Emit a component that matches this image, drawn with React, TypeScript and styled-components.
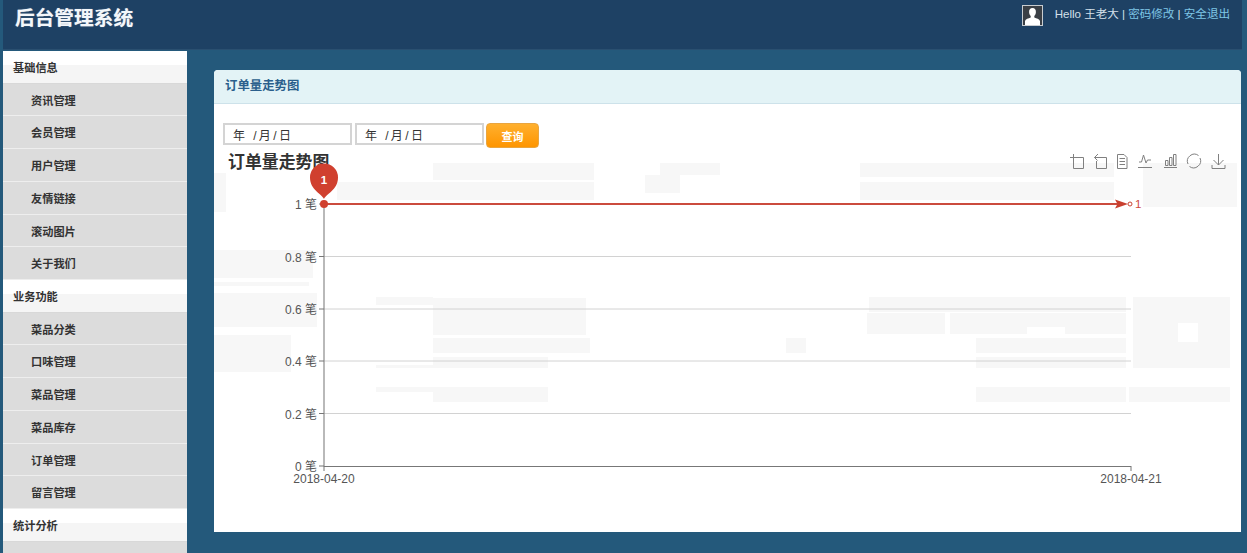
import React from "react";
import styled, { createGlobalStyle } from "styled-components";

const FONT = `"Liberation Sans", "Noto Sans CJK SC", sans-serif`;
const ROW = 32.72;

const Global = createGlobalStyle`
  html, body { margin: 0; padding: 0; background: #24597b; overflow: hidden; }
  * { box-sizing: border-box; }
`;

const Page = styled.div`
  width: 1247px;
  height: 553px;
  overflow: hidden;
  background: #24597b;
  font-family: ${FONT};
  display: flex;
  flex-direction: column;
`;

const Header = styled.header`
  flex: none;
  height: 50px;
  margin: 0 5px 0 3px;
  background: #1e4164;
  border-bottom: 1px solid #2a4f70;
  display: flex;
  justify-content: space-between;
  align-items: flex-start;
`;

const Brand = styled.h1`
  margin: 5px 0 0 12px;
  font-size: 19.7px;
  line-height: 26px;
  font-weight: 700;
  color: #f4f7fa;
  text-shadow: 0 0 1px rgba(255, 255, 255, 0.5);
`;

const UserBar = styled.div`
  display: flex;
  align-items: flex-start;
  padding: 5px 12px 0 0;
`;

const Avatar = styled.svg`
  display: block;
  width: 21px;
  height: 21px;
  margin-right: 12px;
`;

const UserText = styled.div`
  font-size: 11.55px;
  line-height: 18px;
  color: #d5e0ea;
  white-space: nowrap;
`;

const UserLink = styled.a`
  color: #7fc6e6;
  text-decoration: none;
`;

const Body = styled.div`
  flex: 1;
  min-height: 0;
  margin-top: 1px;
  display: flex;
`;

const Sidebar = styled.nav`
  flex: none;
  width: 184px;
  margin-left: 3px;
  overflow: hidden;
`;

const GroupTitle = styled.div`
  height: ${ROW}px;
  padding-left: 10px;
  font-size: 11.2px;
  line-height: ${ROW + 3}px;
  font-weight: 700;
  color: #333;
  background: linear-gradient(#fff 0, #fff 45%, #f5f5f5 45%, #f5f5f5 100%);
  border-bottom: 1px solid #d8d8d8;
`;

const Item = styled.a`
  display: block;
  height: ${ROW}px;
  padding-left: 28px;
  font-size: 11.2px;
  line-height: ${ROW + 3}px;
  font-weight: 700;
  color: #333;
  background: #dcdcdc;
  border-bottom: 1px solid #eeeeee;
  overflow: hidden;
`;

const Main = styled.main`
  flex: 1;
  min-width: 0;
  padding: 19px 6px 21px 27px;
`;

const Panel = styled.section`
  height: 462px;
  background: #fff;
  border-radius: 4px 4px 0 0;
  display: flex;
  flex-direction: column;
`;

const PanelHead = styled.div`
  flex: none;
  height: 34px;
  padding-left: 11px;
  background: #e3f3f6;
  border-bottom: 1px solid #cde2ea;
  border-radius: 4px 4px 0 0;
  font-size: 12.4px;
  line-height: 33px;
  font-weight: 700;
  color: #2a5f8c;
`;

const Filters = styled.div`
  flex: none;
  height: 25px;
  margin: 19px 0 0 9px;
  display: flex;
  align-items: flex-start;
`;

const DateBox = styled.input`
  width: 129px;
  height: 22px;
  margin-right: 3px;
  padding: 0 0 0 8px;
  border: 2px solid #d4d4d4;
  background: #fff;
  font-family: ${FONT};
  font-size: 12px;
  letter-spacing: 2.4px;
  color: #333;
`;

const QueryButton = styled.button`
  width: 53px;
  height: 25px;
  margin-left: -1px;
  padding: 0;
  border: 1px solid #e9a53f;
  border-radius: 4px;
  background: linear-gradient(#ffb02e, #fe9500);
  font-family: ${FONT};
  font-size: 11px;
  font-weight: 700;
  color: #fff;
`;

const Chart = styled.svg`
  display: block;
  flex: 1;
  min-height: 0;
  width: 100%;
  font-family: ${FONT};
`;

const TitleText = styled.text`
  font-size: 16.9px;
  font-weight: 700;
  fill: #333;
`;

const AxisLabel = styled.text`
  font-size: 12px;
  fill: #555;
`;

const Icon = styled.path`
  fill: none;
  stroke: #808080;
  stroke-width: 1;
`;

const groups = [
  { title: "基础信息", items: ["资讯管理", "会员管理", "用户管理", "友情链接", "滚动图片", "关于我们"] },
  { title: "业务功能", items: ["菜品分类", "口味管理", "菜品管理", "菜品库存", "订单管理", "留言管理"] },
  { title: "统计分析", items: [""] },
];

const ghosts: [number, number, number, number][] = [
  [214, 173, 12, 39], [433, 163, 161, 17], [337, 182, 257, 18], [660, 163, 60, 12], [645, 175, 35, 18],
  [214, 250, 99, 28], [214, 282, 95, 4], [214, 293, 103, 34], [214, 335, 77, 37],
  [433, 298, 153, 37], [433, 338, 157, 15], [433, 357, 115, 11], [376, 297, 57, 8], [376, 365, 172, 3],
  [376, 387, 172, 5], [433, 392, 115, 10], [786, 338, 20, 15],
  [860, 163, 254, 14], [860, 182, 254, 18], [1143, 163, 94, 44],
  [869, 297, 257, 15], [867, 313, 78, 21], [950, 313, 176, 14], [950, 327, 77, 7], [1065, 327, 61, 7],
  [976, 338, 150, 15], [976, 357, 150, 11], [976, 387, 150, 15], [1129, 387, 101, 15],
  [1133, 297, 97, 26], [1133, 342, 97, 26], [1133, 323, 45, 19], [1198, 323, 32, 19],
];

const ticks = [
  { y: 204, label: "1 笔" },
  { y: 256.5, label: "0.8 笔" },
  { y: 309, label: "0.6 笔" },
  { y: 361, label: "0.4 笔" },
  { y: 413.5, label: "0.2 笔" },
  { y: 466, label: "0 笔" },
];

export default function App() {
  return (
    <Page>
      <Global />
      <Header>
        <Brand>后台管理系统</Brand>
        <UserBar>
          <Avatar viewBox="0 0 21 21">
            <rect x="0.5" y="0.5" width="20" height="20" fill="#3a3f45" stroke="#c8ccd0" />
            <path d="M10.5 3c2.4 0 3.6 1.8 3.4 4.2-.1 1.6-.8 3-1.6 3.8v1.6c2.2.9 5.2 1.6 5.7 3.4V20H3v-4c.5-1.8 3.500-2.500 5.700-3.400V11c-.8-.8-1.500-2.200-1.600-3.800C6.900 4.800 8.100 3 10.500 3z" fill="#fff" />
          </Avatar>
          <UserText>
            Hello 王老大 | <UserLink>密码修改</UserLink> | <UserLink>安全退出</UserLink>
          </UserText>
        </UserBar>
      </Header>
      <Body>
        <Sidebar>
          {groups.map((g) => (
            <div key={g.title}>
              <GroupTitle>{g.title}</GroupTitle>
              {g.items.map((it, i) => (
                <Item key={i}>{it}</Item>
              ))}
            </div>
          ))}
        </Sidebar>
        <Main>
          <Panel>
            <PanelHead>订单量走势图</PanelHead>
            <Filters>
              <DateBox readOnly value="年 /月/日" />
              <DateBox readOnly value="年 /月/日" />
              <QueryButton>查询</QueryButton>
            </Filters>
            <Chart viewBox="214 148 1027 384" preserveAspectRatio="xMinYMin meet">
              {ghosts.map(([x, y, w, h], i) => (
                <rect key={i} x={x} y={y} width={w} height={h} fill="#f7f7f7" />
              ))}
              <TitleText x="228" y="168">订单量走势图</TitleText>

              {ticks.slice(1, 5).map((t) => (
                <line key={t.y} x1="324" x2="1131" y1={t.y} y2={t.y} stroke="#d2d2d2" />
              ))}
              <line x1="324" x2="324" y1="204" y2="466.500" stroke="#8a8a8a" strokeWidth="1.200" />
              <line x1="324" x2="1131" y1="466.500" y2="466.500" stroke="#777" />
              {ticks.map((t) => (
                <g key={t.label}>
                  <line x1="319" x2="324" y1={t.y} y2={t.y} stroke="#777" />
                  <AxisLabel x="317" y={t.y + 5} textAnchor="end">{t.label}</AxisLabel>
                </g>
              ))}
              <line x1="324" x2="324" y1="466" y2="471" stroke="#777" />
              <line x1="1131" x2="1131" y1="466" y2="471" stroke="#777" />
              <AxisLabel x="324" y="483" textAnchor="middle">2018-04-20</AxisLabel>
              <AxisLabel x="1131" y="483" textAnchor="middle">2018-04-21</AxisLabel>

              <line x1="324" x2="1120" y1="204" y2="204" stroke="#cb4b3d" strokeWidth="2" />
              <path d="M1115 199.500l13 4.500-13 4.500 2.500-4.500z" fill="#c9402f" />
              <circle cx="1130" cy="204" r="2" fill="#fff" stroke="#c9402f" />
              <text x="1135" y="208" fontSize="11.500" fill="#cf4a3c">1</text>
              <circle cx="324" cy="204" r="4" fill="#d0402f" />
              <path d="M324 199c-2-5-14-9-14-21.500a14 14 0 0 1 28 0c0 12.500-12 16.500-14 21.500z" fill="#d0402f" />
              <text x="324" y="184" fontSize="11.500" fontWeight="700" fill="#fff" textAnchor="middle">1</text>

              <Icon d="M1070 157.500H1083.500V168.500H1073.500V154" />
              <Icon d="M1098 154l-3.500 3.500H1106.500V168.500H1096.500V161M1094.500 157.500l3 3" />
              <Icon d="M1117.500 154.500H1124l3 3V168.500H1117.500ZM1119.500 158.500H1125M1119.500 161.500H1125M1119.500 164.500H1125" />
              <Icon d="M1138 167.500H1152M1139 162h2.500l2-7 2.500 8 1.500-3h3.500" />
              <Icon d="M1164 167.500H1177M1165.500 160.500h2.500v5h-2.500zM1169.500 157.500h2.500v8h-2.500zM1173.500 154.500h2.500v11h-2.500z" />
              <Icon d="M1188 164a7 7 0 0 1 10.500-8.500M1200 158a7 7 0 0 1-10.500 8.500" />
              <Icon d="M1218.500 154v11M1213.500 160l5 5 5-5M1212 165v3.500h13V165" />
            </Chart>
          </Panel>
        </Main>
      </Body>
    </Page>
  );
}
